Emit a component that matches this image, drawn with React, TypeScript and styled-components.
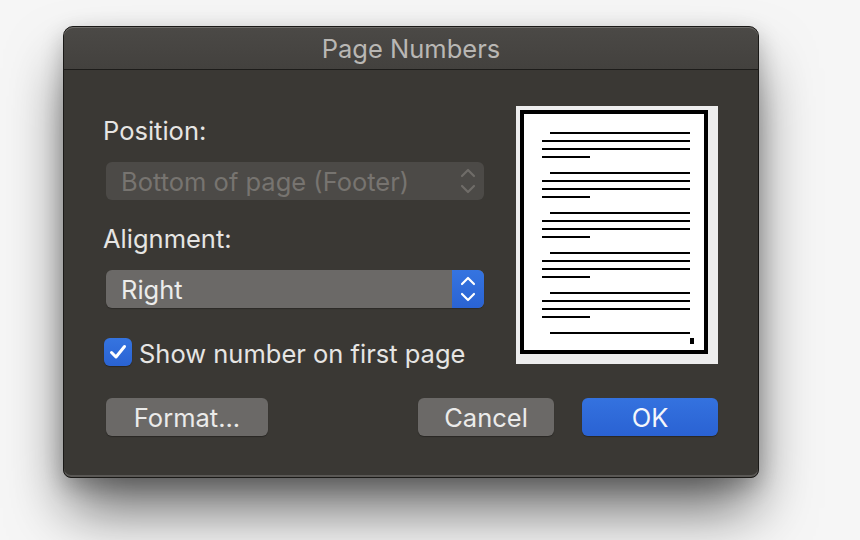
import React from "react";
import styled, { createGlobalStyle } from "styled-components";

const GlobalStyle = createGlobalStyle`
  html, body { margin: 0; padding: 0; }
  body {
    background: #f4f4f4;
    font-family: Inter, "Noto Sans", "Liberation Sans", sans-serif;
    width: 860px;
    height: 540px;
    overflow: hidden;
  }
`;

const Stage = styled.div`
  width: 860px;
  height: 540px;
  box-sizing: border-box;
  padding: 26px 0 0 63px;
  background: #f6f6f6;
`;

const Window = styled.div`
  width: 696px;
  height: 452px;
  box-sizing: border-box;
  border: 1px solid #1a1917;
  border-radius: 10px 10px 8px 8px;
  background: #3a3834;
  box-shadow: inset 0 1px 0 #6e6c69, inset 0 -2px 0 #5a5855,
    0 36px 60px -6px rgba(0, 0, 0, 0.6), 0 8px 22px rgba(0, 0, 0, 0.22);
  overflow: hidden;
  display: flex;
  flex-direction: column;
  color: #e6e5e3;
  font-size: 25.5px;
`;

const TitleBar = styled.div`
  height: 43px;
  flex: none;
  box-sizing: border-box;
  padding-top: 2px;
  border-bottom: 1px solid #1d1c1a;
  background: linear-gradient(#4b4946, #43413e);
  box-shadow: inset 0 1px 0 #6e6c69;
  border-radius: 9px 9px 0 0;
  display: flex;
  align-items: center;
  justify-content: center;
  color: #b9b7b4;
  line-height: 30px;
`;

const Body = styled.div`
  flex: 1;
  padding: 36px 40px 0 42px;
  display: flex;
  flex-direction: column;
`;

const TopRow = styled.div`
  display: flex;
  gap: 32px;
  align-items: flex-start;
  height: 260px;
`;

const LeftColumn = styled.div`
  width: 378px;
  padding-top: 8px;
  display: flex;
  flex-direction: column;
`;

const Label = styled.div<{ $gap?: number }>`
  line-height: 30px;
  height: 30px;
  padding-top: 2px;
  box-sizing: border-box;
  margin-left: -3px;
  margin-top: ${(p) => p.$gap ?? 0}px;
  color: #e6e5e3;
`;

const Popup = styled.div<{ $disabled?: boolean }>`
  margin-top: 18px;
  height: 38px;
  border-radius: 6px;
  background: ${(p) => (p.$disabled ? "#4c4a47" : "#6b6967")};
  box-shadow: ${(p) =>
    p.$disabled ? "none" : "0 1px 1px rgba(0,0,0,0.25)"};
  color: ${(p) => (p.$disabled ? "#777470" : "#ececeb")};
  display: flex;
  align-items: center;
  overflow: hidden;
`;

const PopupText = styled.span`
  flex: 1;
  padding-left: 15px;
  padding-top: 2px;
  line-height: 36px;
  white-space: nowrap;
`;

const Stepper = styled.span<{ $active?: boolean }>`
  width: 32px;
  height: 38px;
  flex: none;
  display: flex;
  align-items: center;
  justify-content: center;
  background: ${(p) =>
    p.$active ? "linear-gradient(#3574e0, #2a63d3)" : "transparent"};
  color: ${(p) => (p.$active ? "#ffffff" : "#6f6c68")};
`;

const CheckRow = styled.label`
  margin-top: 30px;
  height: 28px;
  display: flex;
  align-items: center;
  gap: 7px;
  margin-left: -2px;
  white-space: nowrap;
`;

const CheckText = styled.span`
  line-height: 30px;
  padding-top: 3px;
`;

const CheckBox = styled.span`
  width: 28px;
  height: 28px;
  flex: none;
  border-radius: 6px;
  background: linear-gradient(#3574e0, #2a63d3);
  box-shadow: 0 1px 1px rgba(0, 0, 0, 0.3);
  display: flex;
  align-items: center;
  justify-content: center;
`;

const Preview = styled.div`
  width: 202px;
  height: 258px;
  flex: none;
  display: block;
`;

const ButtonRow = styled.div`
  margin-top: 32px;
  display: flex;
  align-items: center;
`;

const Spacer = styled.div`
  flex: 1;
`;

const Button = styled.button<{ $primary?: boolean; $width: number; $gap?: number }>`
  width: ${(p) => p.$width}px;
  height: 38px;
  margin-left: ${(p) => p.$gap ?? 0}px;
  border: none;
  border-radius: 6px;
  padding: 2px 0 0;
  font-family: inherit;
  font-size: inherit;
  line-height: 36px;
  color: ${(p) => (p.$primary ? "#f4f6fb" : "#ebebea")};
  background: ${(p) =>
    p.$primary ? "linear-gradient(#3472df, #2a62d3)" : "#6b6967"};
  box-shadow: 0 1px 1px rgba(0, 0, 0, 0.3);
  text-align: center;
`;

const StepperIcon = () => (
  <svg width="16" height="28" viewBox="0 0 16 28" fill="none">
    <path
      d="M2 9 L8 3 L14 9"
      stroke="currentColor"
      strokeWidth="2.2"
      strokeLinecap="round"
      strokeLinejoin="round"
    />
    <path
      d="M2 19 L8 25 L14 19"
      stroke="currentColor"
      strokeWidth="2.2"
      strokeLinecap="round"
      strokeLinejoin="round"
    />
  </svg>
);

const CheckIcon = () => (
  <svg width="28" height="28" viewBox="0 0 28 28" fill="none">
    <path
      d="M7.5 14.5 L12 19 L20.5 8.5"
      stroke="#ffffff"
      strokeWidth="3"
      strokeLinecap="round"
      strokeLinejoin="round"
    />
  </svg>
);

const paragraphs = [0, 1, 2, 3, 4];

const PagePreview = () => (
  <svg width="202" height="258" viewBox="0 0 202 258">
    <rect x="0" y="0" width="202" height="258" fill="#ededed" />
    <rect x="4" y="4" width="188" height="244" fill="#000" />
    <rect x="8" y="8" width="180" height="236" fill="#fff" />
    {paragraphs.map((i) => {
      const y = 26 + i * 40;
      return (
        <g key={i} fill="#000">
          <rect x="34" y={y} width="140" height="2" />
          <rect x="26" y={y + 8} width="148" height="2" />
          <rect x="26" y={y + 16} width="148" height="2" />
          <rect x="26" y={y + 24} width="48" height="2" />
        </g>
      );
    })}
    <rect x="34" y="226" width="140" height="2" fill="#000" />
    <rect x="174" y="232" width="4" height="6" fill="#000" />
  </svg>
);

export default function App() {
  return (
    <>
      <GlobalStyle />
      <Stage>
        <Window>
          <TitleBar>Page Numbers</TitleBar>
          <Body>
            <TopRow>
              <LeftColumn>
                <Label>Position:</Label>
                <Popup $disabled>
                  <PopupText>Bottom of page (Footer)</PopupText>
                  <Stepper>
                    <StepperIcon />
                  </Stepper>
                </Popup>
                <Label $gap={22}>Alignment:</Label>
                <Popup>
                  <PopupText>Right</PopupText>
                  <Stepper $active>
                    <StepperIcon />
                  </Stepper>
                </Popup>
                <CheckRow>
                  <CheckBox>
                    <CheckIcon />
                  </CheckBox>
                  <CheckText>Show number on first page</CheckText>
                </CheckRow>
              </LeftColumn>
              <Preview>
                <PagePreview />
              </Preview>
            </TopRow>
            <ButtonRow>
              <Button $width={162}>Format...</Button>
              <Spacer />
              <Button $width={136}>Cancel</Button>
              <Button $width={136} $gap={28} $primary>
                OK
              </Button>
            </ButtonRow>
          </Body>
        </Window>
      </Stage>
    </>
  );
}
